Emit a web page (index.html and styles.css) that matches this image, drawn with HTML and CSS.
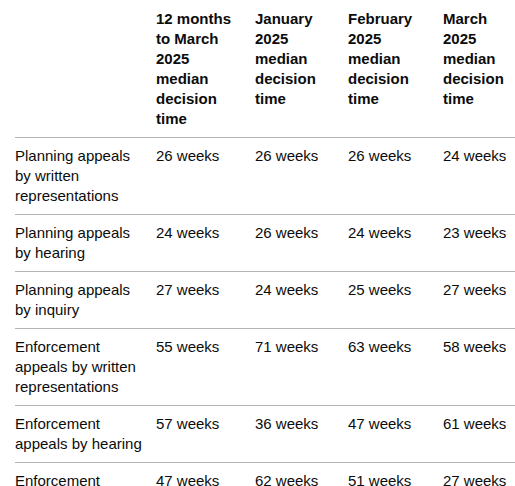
FILE: index.html
```html
<!DOCTYPE html>
<html lang="en">
<head>
<meta charset="utf-8">
<title>Appeal decision times</title>
<link rel="stylesheet" href="styles.css">
</head>
<body>
<table class="table">
  <colgroup>
    <col class="c1"><col class="c2"><col class="c3"><col class="c4"><col class="c5">
  </colgroup>
  <thead>
    <tr>
      <th></th>
      <th>12 months to March 2025 median decision time</th>
      <th>January 2025 median decision time</th>
      <th>February 2025 median decision time</th>
      <th>March 2025 median decision time</th>
    </tr>
  </thead>
  <tbody>
    <tr><td>Planning appeals by written representations</td><td>26 weeks</td><td>26 weeks</td><td>26 weeks</td><td>24 weeks</td></tr>
    <tr><td>Planning appeals by hearing</td><td>24 weeks</td><td>26 weeks</td><td>24 weeks</td><td>23 weeks</td></tr>
    <tr><td>Planning appeals by inquiry</td><td>27 weeks</td><td>24 weeks</td><td>25 weeks</td><td>27 weeks</td></tr>
    <tr><td>Enforcement appeals by written representations</td><td>55 weeks</td><td>71 weeks</td><td>63 weeks</td><td>58 weeks</td></tr>
    <tr><td>Enforcement appeals by hearing</td><td>57 weeks</td><td>36 weeks</td><td>47 weeks</td><td>61 weeks</td></tr>
    <tr><td>Enforcement appeals by inquiry</td><td>47 weeks</td><td>62 weeks</td><td>51 weeks</td><td>27 weeks</td></tr>
  </tbody>
</table>
</body>
</html>
```
FILE: styles.css
```css
html, body {
  margin: 0;
  padding: 0;
  background: #ffffff;
}
body {
  padding: 1px 0 0 15px;
  font-family: "Liberation Sans", Arial, sans-serif;
  color: #0b0c0c;
}
.table {
  width: 500px;
  table-layout: fixed;
  border-collapse: collapse;
  border-spacing: 0;
  font-size: 15px;
  line-height: 20px;
}
.c1 { width: 141px; }
.c2 { width: 99px; }
.c3 { width: 93px; }
.c4 { width: 95px; }
.c5 { width: 72px; }
.table th,
.table td {
  padding: 8px 20px 8px 0;
  text-align: left;
  vertical-align: top;
  border-bottom: 1px solid #b1b4b6;
}
.table th {
  font-weight: 700;
}
.table th:first-child,
.table td:first-child {
  padding-right: 12px;
}
.table th:last-child,
.table td:last-child {
  padding-right: 0;
}
```
